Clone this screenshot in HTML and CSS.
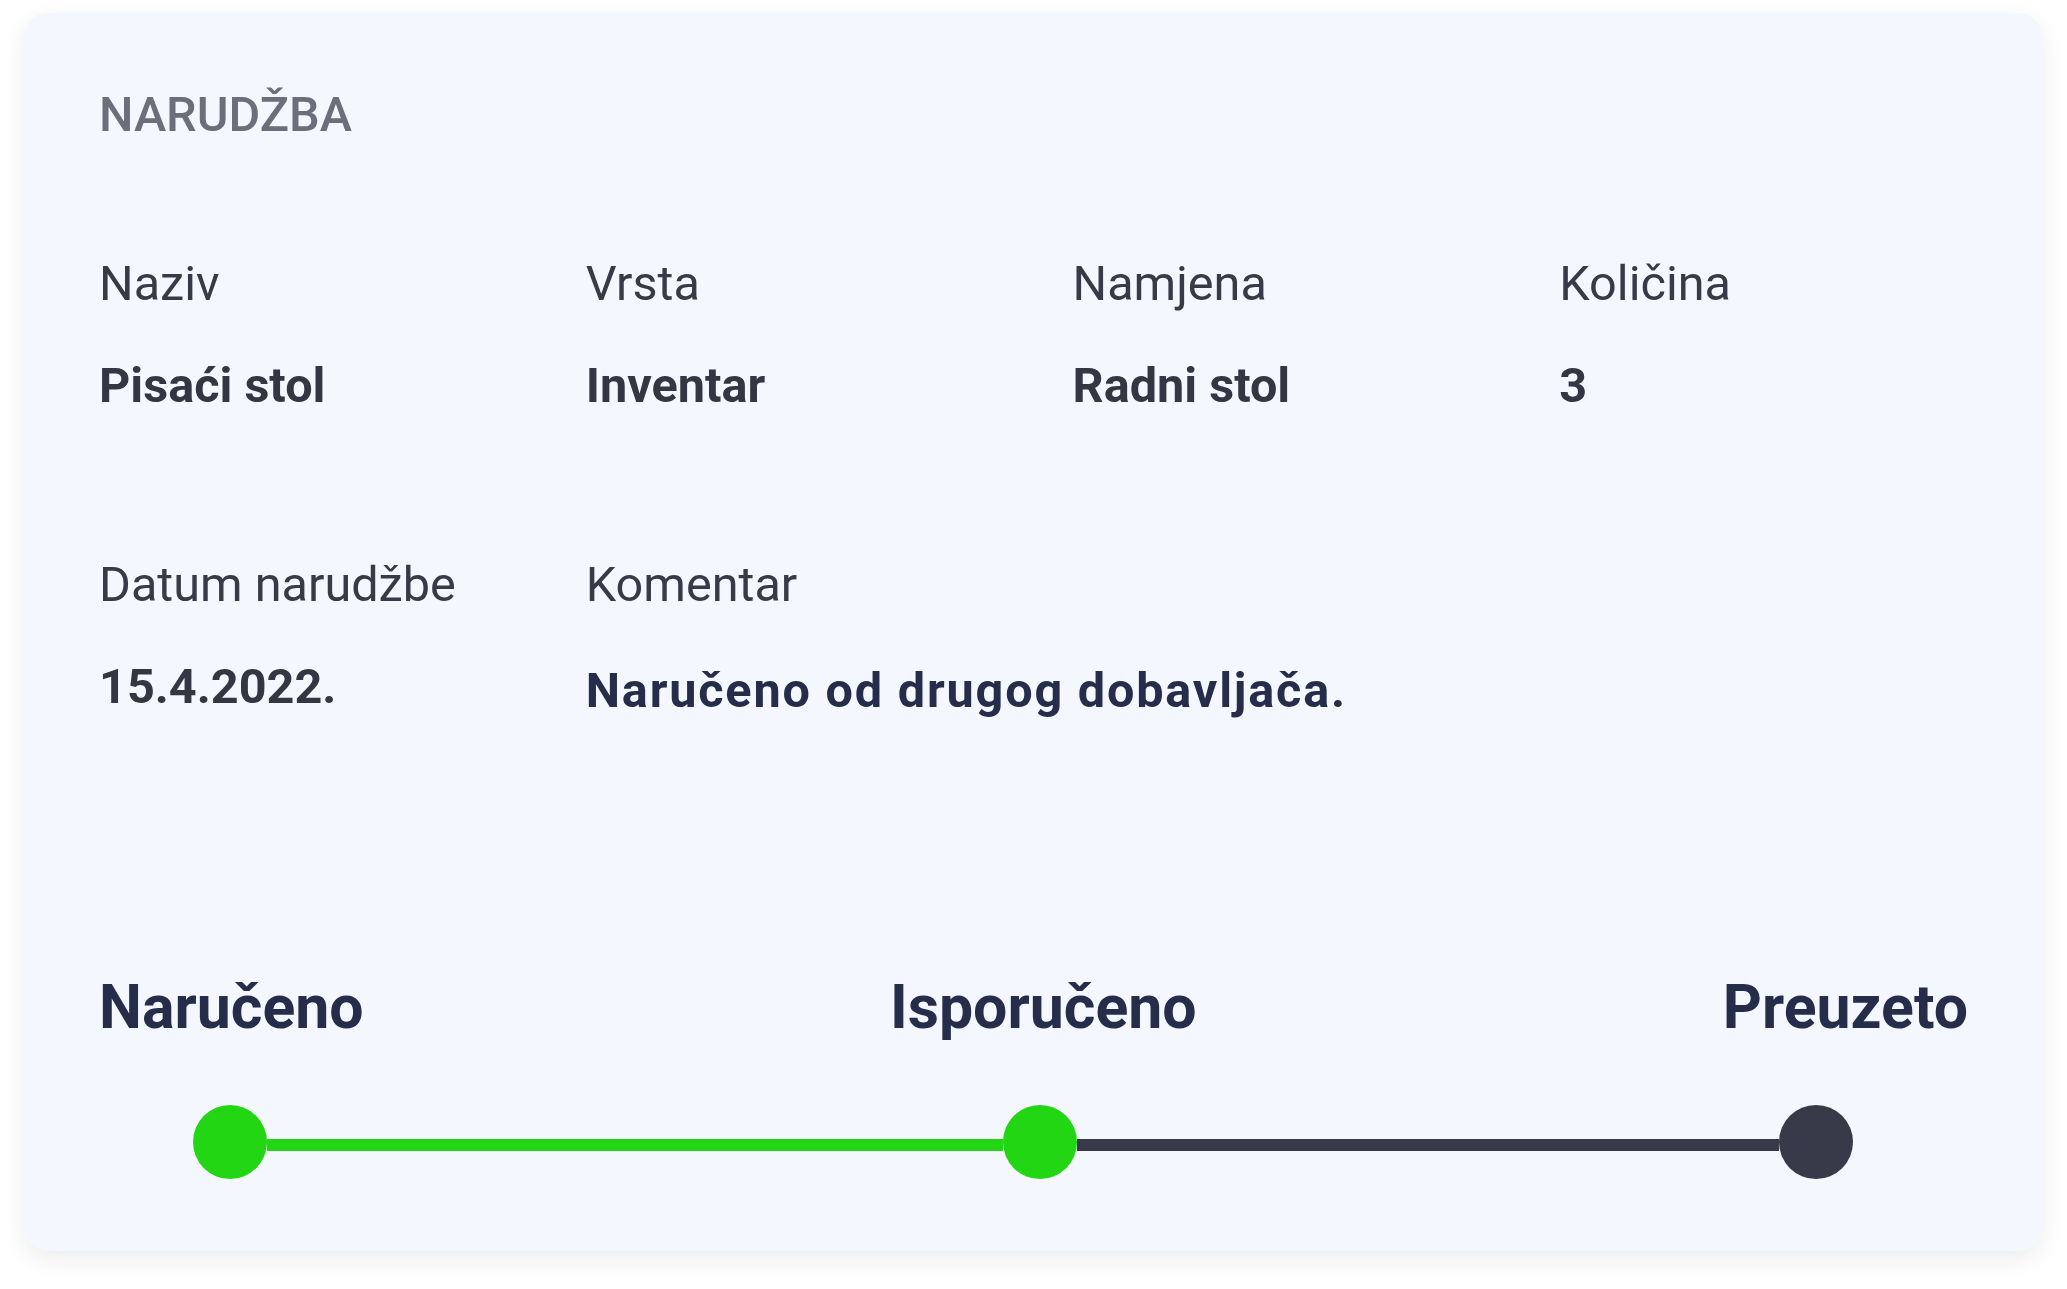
FILE: index.html
```html
<!DOCTYPE html>
<html lang="hr">
<head>
<meta charset="utf-8">
<title>Narudžba</title>
<link rel="stylesheet" href="styles.css">
</head>
<body>
<div class="card">
  <h2 class="title">NARUDŽBA</h2>
  <div class="fields">
    <div class="field"><div class="label">Naziv</div><div class="value">Pisaći stol</div></div>
    <div class="field"><div class="label">Vrsta</div><div class="value">Inventar</div></div>
    <div class="field"><div class="label">Namjena</div><div class="value">Radni stol</div></div>
    <div class="field"><div class="label">Količina</div><div class="value">3</div></div>
  </div>
  <div class="fields second">
    <div class="field"><div class="label">Datum narudžbe</div><div class="value">15.4.2022.</div></div>
    <div class="field wide"><div class="label">Komentar</div><div class="value comment">Naručeno od drugog dobavljača.</div></div>
  </div>
  <div class="stepper">
    <div class="step-labels">
      <span class="step-label">Naručeno</span>
      <span class="step-label">Isporučeno</span>
      <span class="step-label">Preuzeto</span>
    </div>
    <div class="track">
      <span class="dot done"></span>
      <span class="seg seg-a done"></span>
      <span class="dot done"></span>
      <span class="seg seg-b"></span>
      <span class="dot"></span>
    </div>
  </div>
</div>
</body>
</html>
```
FILE: styles.css
```css
html, body {
  margin: 0;
  padding: 0;
  background: #ffffff;
}
body {
  font-family: Roboto, "Liberation Sans", Arial, sans-serif;
}
.card {
  margin: 13px 25px 38px 24px;
  padding: 74px 74px 72px 75px;
  background: #f4f7fe;
  border-radius: 24px;
  box-shadow: 0 8px 26px rgba(0, 0, 0, 0.08);
}
.title {
  margin: 0;
  font-size: 48.6px;
  line-height: 56px;
  font-weight: 500;
  color: #6b6e7b;
}
.fields {
  display: grid;
  grid-template-columns: repeat(4, 1fr);
  column-gap: 78px;
  margin-top: 113px;
}
.fields.second {
  margin-top: 143px;
}
.field.wide {
  grid-column: 2 / span 3;
}
.label {
  font-size: 48.6px;
  line-height: 56px;
  font-weight: 400;
  color: #383a48;
  white-space: nowrap;
}
.value {
  margin-top: 46px;
  font-size: 48.6px;
  line-height: 56px;
  font-weight: 700;
  color: #343643;
  white-space: nowrap;
}
.value.comment {
  padding-top: 4px;
  letter-spacing: 1.8px;
  color: #252d4a;
}
.stepper {
  margin-top: 254px;
}
.step-labels {
  display: flex;
  justify-content: space-between;
}
.step-label {
  font-size: 60.8px;
  line-height: 70px;
  font-weight: 700;
  color: #252d4a;
}
.track {
  display: flex;
  align-items: flex-start;
  margin: 62px 115px 0 94px;
  height: 74px;
}
.dot {
  flex: 0 0 74px;
  width: 74px;
  height: 74px;
  border-radius: 50%;
  background: #383a4a;
}
.dot.done {
  background: #22d614;
}
.seg {
  height: 12px;
  margin-top: 34px;
  background: #383a4a;
}
.seg.done {
  background: #22d614;
}
.seg-a {
  flex: 737 1 0;
}
.seg-b {
  flex: 703 1 0;
}
```
